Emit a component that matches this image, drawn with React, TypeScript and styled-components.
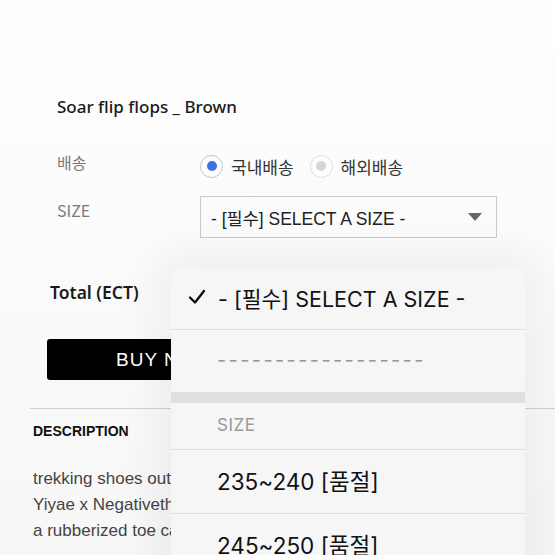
import React from "react";
import styled, { createGlobalStyle } from "styled-components";

const GlobalStyle = createGlobalStyle`
  html, body {
    margin: 0;
    padding: 0;
    background: #ffffff;
  }
  body {
    font-family: "Noto Sans", "Noto Sans CJK KR", sans-serif;
  }
`;

const Page = styled.div`
  position: relative;
  width: 555px;
  height: 555px;
  overflow: hidden;
  background: linear-gradient(180deg, #fefefe 0%, #fbfbfb 45%, #f7f7f7 100%);
`;

const Product = styled.section`
  padding: 94px 0 0 57px;
`;

const Title = styled.h1`
  margin: 0;
  font-size: 17px;
  font-weight: 500;
  color: #1a1a1a;
  line-height: 26px;
`;

const OptionGrid = styled.div`
  display: grid;
  grid-template-columns: 143px 1fr;
  row-gap: 14px;
  margin-top: 30px;
  align-items: start;
`;

const Label = styled.div<{ $top?: number }>`
  font-family: "Noto Sans CJK KR", "Noto Sans", sans-serif;
  font-size: 16px;
  color: #7a7a7a;
  line-height: 24px;
  padding-top: ${(p) => p.$top ?? 0}px;
`;

const RadioGroup = styled.div`
  display: flex;
  align-items: center;
  gap: 16px;
  height: 32px;
`;

const RadioOption = styled.label`
  display: flex;
  align-items: center;
  gap: 8px;
  font-family: "Noto Sans CJK KR", sans-serif;
  font-size: 17px;
  color: #333;
`;

const RadioDot = styled.span<{ $on?: boolean }>`
  width: 21px;
  height: 21px;
  border-radius: 50%;
  border: 1px solid ${(p) => (p.$on ? "#b9c4d6" : "#dcdcdc")};
  background: #fdfdfd;
  display: flex;
  align-items: center;
  justify-content: center;
  &::after {
    content: "";
    width: 10px;
    height: 10px;
    border-radius: 50%;
    background: ${(p) => (p.$on ? "#3d73dd" : "#d6d6d6")};
  }
`;

const Select = styled.div`
  width: 297px;
  height: 42px;
  box-sizing: border-box;
  border: 1px solid #c9c9c9;
  background: #fbfbfb;
  display: flex;
  align-items: center;
  justify-content: space-between;
  padding: 0 14px 0 10px;
  font-family: "Liberation Sans", "Noto Sans CJK KR", sans-serif;
  font-size: 17.5px;
  color: #222;
`;

const Caret = styled.span`
  width: 0;
  height: 0;
  border-left: 7px solid transparent;
  border-right: 7px solid transparent;
  border-top: 8px solid #666;
`;

const TotalRow = styled.div`
  margin: 41px 0 0 50px;
  font-size: 17.5px;
  font-weight: 600;
  color: #1a1a1a;
  line-height: 26px;
`;

const BuyButton = styled.button`
  display: block;
  margin: 34px 0 0 47px;
  width: 260px;
  height: 41px;
  background: #000;
  color: #fff;
  border: 0;
  border-radius: 3px;
  font-family: "Liberation Sans", sans-serif;
  font-size: 19px;
  letter-spacing: 1px;
  text-align: left;
  padding-left: 69px;
`;

const Description = styled.section`
  margin: 28px 0 0 30px;
  border-top: 1px solid #cfcfcf;
  padding: 12px 0 0 3px;
  font-family: "Liberation Sans", sans-serif;
`;

const DescHead = styled.h2`
  margin: 0;
  font-size: 14px;
  font-weight: 700;
  color: #111;
  line-height: 20px;
`;

const DescText = styled.p`
  margin: 25px 0 0;
  font-size: 17px;
  line-height: 26px;
  color: #444;
  white-space: nowrap;
`;

const Picker = styled.div`
  position: absolute;
  left: 171px;
  top: 268px;
  width: 354px;
  height: 320px;
  background: #f6f6f6;
  border-radius: 14px 14px 0 0;
  box-shadow: 0 0 40px 16px rgba(0, 0, 0, 0.05);
  overflow: hidden;
  font-family: Inter, "Noto Sans CJK KR", sans-serif;
`;

const PickerRow = styled.div<{ $h: number; $size?: number }>`
  height: ${(p) => p.$h}px;
  display: flex;
  align-items: center;
  padding: 0 0 3px 46px;
  box-sizing: border-box;
  border-bottom: 1px solid #dcdcdc;
  font-size: ${(p) => p.$size ?? 22.5}px;
  color: #111;
`;

const SelectedRow = styled(PickerRow)`
  padding-left: 17px;
  gap: 12px;
`;

const Dashes = styled.span`
  color: #999;
  font-size: 20px;
  letter-spacing: 2.4px;
`;

const GroupGap = styled.div`
  height: 10px;
  background: #e0e0e0;
`;

const GroupHead = styled(PickerRow)`
  color: #999;
  letter-spacing: 0.5px;
`;

const Check = () => (
  <svg width="18" height="16" viewBox="0 0 18 16">
    <path d="M2 8.5 L7 13.5 L16 2" fill="none" stroke="#111" strokeWidth="2.4" strokeLinecap="round" strokeLinejoin="round" />
  </svg>
);

export default function App() {
  return (
    <>
      <GlobalStyle />
      <Page>
        <Product>
          <Title>Soar flip flops _ Brown</Title>
          <OptionGrid>
            <Label $top={0}>배송</Label>
            <RadioGroup>
              <RadioOption>
                <RadioDot $on />
                국내배송
              </RadioOption>
              <RadioOption>
                <RadioDot />
                해외배송
              </RadioOption>
            </RadioGroup>
            <Label $top={2}>SIZE</Label>
            <Select>
              <span>- [필수] SELECT A SIZE -</span>
              <Caret />
            </Select>
          </OptionGrid>
        </Product>
        <TotalRow>Total (ECT)</TotalRow>
        <BuyButton>BUY NOW</BuyButton>
        <Description>
          <DescHead>DESCRIPTION</DescHead>
          <DescText>
            trekking shoes outdoor
            <br />
            Yiyae x Negativethinking
            <br />
            a rubberized toe cap
          </DescText>
        </Description>
        <Picker>
          <SelectedRow $h={62} $size={21.5}>
            <Check />- [필수] SELECT A SIZE -
          </SelectedRow>
          <PickerRow $h={63}>
            <Dashes>------------------</Dashes>
          </PickerRow>
          <GroupGap />
          <GroupHead $h={47} $size={17}>SIZE</GroupHead>
          <PickerRow $h={64}>235~240 [품절]</PickerRow>
          <PickerRow $h={64}>245~250 [품절]</PickerRow>
        </Picker>
      </Page>
    </>
  );
}
